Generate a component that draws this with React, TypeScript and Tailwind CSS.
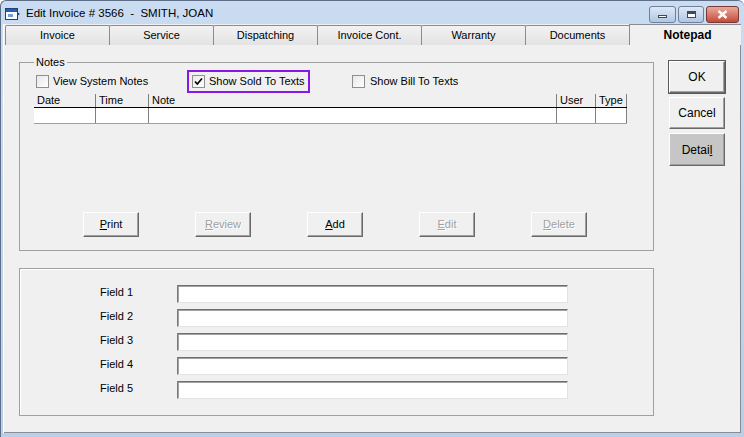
import React from "react";

const tabs = ["Invoice", "Service", "Dispatching", "Invoice Cont.", "Warranty", "Documents"];

const columns = [
  { name: "Date", w: "w-[61px]" },
  { name: "Time", w: "w-[53px]" },
  { name: "Note", w: "w-[408px]" },
  { name: "User", w: "w-[39px]" },
  { name: "Type", w: "w-[32px]" },
];

const raised =
  "border border-t-white border-l-white border-b-[#696969] border-r-[#696969] shadow-[inset_-1px_-1px_0_#a0a0a0] bg-[#f0f0f0]";

function Check({ checked }: { checked?: boolean }) {
  return (
    <span className="flex h-[13px] w-[13px] shrink-0 items-center justify-center border border-[#8f8f8f] bg-gradient-to-br from-[#e8e8e8] to-white">
      {checked && (
        <svg width="9" height="9" viewBox="0 0 9 9">
          <path d="M1 4.5 L3.3 7 L8 1.5" fill="none" stroke="#000" strokeWidth="1.6" />
        </svg>
      )}
    </span>
  );
}

function Btn({ keyChar, rest, disabled }: { keyChar: string; rest: string; disabled?: boolean }) {
  return (
    <button
      className={`${raised} flex h-[25px] w-[56px] items-center justify-center ${disabled ? "text-[#a0a0a0] [text-shadow:1px_1px_0_#fff]" : "text-black"}`}
    >
      <u>{keyChar}</u>
      {rest}
    </button>
  );
}

export default function App() {
  return (
    <div className="flex h-[437px] w-[744px] flex-col overflow-hidden rounded-t-[6px] border-l border-t border-[#5d6e86] bg-gradient-to-b from-[#cadcf1] to-[#b8cfea] font-['Liberation_Sans',Arial,sans-serif] text-[11px] text-black">
      {/* title bar */}
      <div className="flex h-[23px] shrink-0 items-center pl-[4px] pr-[5px]">
        <svg width="16" height="14" viewBox="0 0 16 14" className="mt-[2px]">
          <rect x="0.5" y="1.5" width="12" height="11" fill="#fff" stroke="#1d3f7a" />
          <rect x="1" y="2" width="11" height="3" fill="#2b5cb0" />
          <rect x="3" y="7" width="5" height="3" fill="#6aa0e0" />
          <path d="M12 5 L15 7 L12 9 Z" fill="#1d3f7a" />
        </svg>
        <span className="ml-[5px] mt-[2px] whitespace-pre text-[11.5px] text-black">Edit Invoice # 3566  -  SMITH, JOAN</span>
        <div className="ml-auto mt-[3px] flex gap-[2px]">
          <div className="flex h-[17px] w-[27px] items-center justify-center rounded-[3px] border border-[#6d7f9b] bg-gradient-to-b from-[#dfe9f6] to-[#b2c6e2]">
            <span className="mt-[4px] h-[3px] w-[9px] border border-[#3b4a60] bg-white" />
          </div>
          <div className="flex h-[17px] w-[26px] items-center justify-center rounded-[3px] border border-[#6d7f9b] bg-gradient-to-b from-[#dfe9f6] to-[#b2c6e2]">
            <span className="h-[7px] w-[9px] border border-[#3b4a60] bg-white shadow-[inset_0_2px_0_#3b4a60]" />
          </div>
          <div className="flex h-[17px] w-[33px] items-center justify-center rounded-[3px] border border-[#7a3a34] bg-gradient-to-b from-[#e9a99c] to-[#c4493a]">
            <svg width="11" height="9" viewBox="0 0 11 9">
              <path d="M1.5 1 L9.5 8 M9.5 1 L1.5 8" stroke="#fff" strokeWidth="2.4" />
            </svg>
          </div>
        </div>
      </div>

      {/* client area */}
      <div className="mb-[4px] ml-[2px] mr-[3px] flex flex-1 flex-col border-l border-white bg-[#f0f0f0]">
        {/* tabs */}
        <div className="flex h-[21px] shrink-0 items-end pl-[1px]">
          {tabs.map((t) => (
            <div
              key={t}
              className="-ml-px flex h-[20px] w-[105px] items-center justify-center rounded-t-[2px] border border-b-0 border-[#898c95] bg-gradient-to-b from-[#f2f2f2] to-[#e3e3e3] first:ml-0"
            >
              {t}
            </div>
          ))}
          <div className="-ml-px flex h-[21px] flex-1 items-center justify-center border-l border-t border-[#898c95] bg-[#f0f0f0] pl-[4px] text-[12px] font-bold">
            Notepad
          </div>
        </div>

        {/* tab page */}
        <div className="flex flex-1 border-b border-r border-[#898c95]">
          <div className="ml-[15px] flex w-[635px] flex-col">
            <fieldset className="mt-[11px] border border-[#a0a0a0]">
              <legend className="ml-[14px] px-[2px] leading-[13px]">Notes</legend>
              <div className="flex h-[24px] items-center">
                <label className="ml-[16px] flex w-[151px] items-center gap-[4px]">
                  <Check />
                  View System Notes
                </label>
                <label className="flex h-[23px] w-[123px] items-center gap-[4px] border-2 border-[#8a16e8] pl-[3px]">
                  <Check checked />
                  Show Sold To Texts
                </label>
                <label className="ml-[42px] flex items-center gap-[5px]">
                  <Check />
                  Show Bill To Texts
                </label>
              </div>
              <div className="ml-[14px] mt-[1px] flex w-[593px] flex-col">
                <div className="flex h-[14px] border-b border-black">
                  {columns.map((c, i) => (
                    <div
                      key={c.name}
                      className={`${c.w} flex items-center pl-[3px] leading-[13px] ${i > 0 ? "border-l border-[#808080]" : ""} ${i === columns.length - 1 ? "border-r border-[#808080]" : ""}`}
                    >
                      {c.name}
                    </div>
                  ))}
                </div>
                <div className="flex h-[16px] border-b border-[#a0a0a0] bg-white">
                  {columns.map((c, i) => (
                    <div
                      key={c.name}
                      className={`${c.w} ${i > 0 ? "border-l border-[#808080]" : ""} ${i === columns.length - 1 ? "border-r border-[#808080]" : ""}`}
                    />
                  ))}
                </div>
              </div>
              <div className="mb-[13px] ml-[63px] mt-[88px] flex gap-[56px]">
                <Btn keyChar="P" rest="rint" />
                <Btn keyChar="R" rest="eview" disabled />
                <Btn keyChar="A" rest="dd" />
                <Btn keyChar="E" rest="dit" disabled />
                <Btn keyChar="D" rest="elete" disabled />
              </div>
            </fieldset>

            <div className="mt-[17px] flex flex-col gap-[6px] border border-[#a0a0a0] pb-[16px] pt-[16px] shadow-[inset_1px_1px_0_#fff]">
              {[1, 2, 3, 4, 5].map((n) => (
                <div key={n} className="flex h-[18px] items-center">
                  <span className="-mt-[3px] ml-[80px] w-[77px]">Field {n}</span>
                  <div className="h-[18px] w-[391px] border border-b-[#e3e3e3] border-l-[#7a7a7a] border-r-[#e3e3e3] border-t-[#6f6f6f] bg-white shadow-[inset_1px_1px_0_#a0a0a0]" />
                </div>
              ))}
            </div>
          </div>

          <div className="ml-[15px] mt-[16px] flex w-[56px] flex-col gap-[4px]">
            <button className={`${raised} h-[32px] text-[12px] outline outline-1 outline-[#5a5a5a]`}>OK</button>
            <button className={`${raised} h-[32px] text-[12px]`}>Cancel</button>
            <button className={`${raised} h-[33px] !bg-[#c6c6c6] text-[12px]`}>
              Detai<u>l</u>
            </button>
          </div>
        </div>
      </div>
    </div>
  );
}
